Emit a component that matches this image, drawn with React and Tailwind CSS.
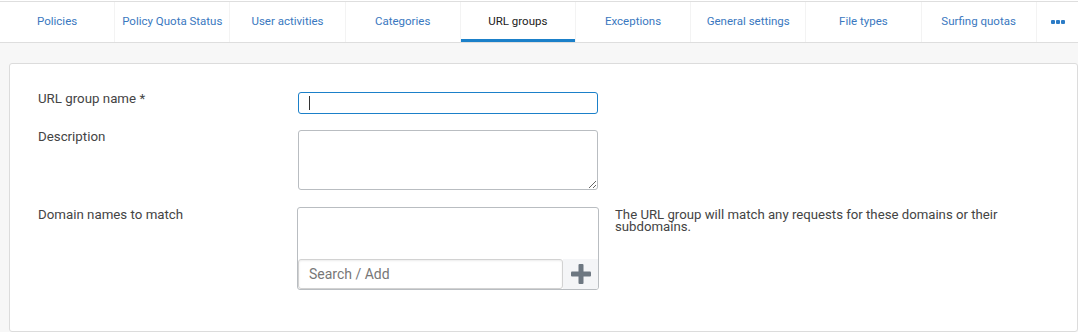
const tabs = [
  'Policies',
  'Policy Quota Status',
  'User activities',
  'Categories',
  'URL groups',
  'Exceptions',
  'General settings',
  'File types',
  'Surfing quotas',
];

function PlusIcon() {
  return (
    <svg width="20" height="20" viewBox="0 0 20 20">
      <rect x="7.5" y="0" width="5" height="20" rx="1" fill="#6d7781" />
      <rect x="0" y="7.5" width="20" height="5" rx="1" fill="#6d7781" />
    </svg>
  );
}

export default function App() {
  return (
    <div className="w-[1078px] h-[332px] bg-[#f7f7f7] font-['Roboto',sans-serif] overflow-hidden">
      <div className="bg-white pt-px">
        <div className="flex h-[42px] border-t border-b border-[#dedede]">
          {tabs.map((t) => {
            const active = t === 'URL groups';
            return (
              <div
                key={t}
                className={`w-[115.2px] shrink-0 flex items-center justify-center border-r border-[#f3f3f3] text-[11.5px] relative ${
                  active ? 'text-[#222]' : 'text-[#3a78c0]'
                }`}
              >
                <span className="-mt-px">{t}</span>
                {active && <div className="absolute left-0 right-0 bottom-0 h-[3px] bg-[#1b80c9]" />}
              </div>
            );
          })}
          <div className="flex-1 flex items-center justify-center gap-[1px] -mt-px pl-[2px]">
            <span className="w-[4px] h-[4px] rounded-[1px] bg-[#2c7cc6]" />
            <span className="w-[4px] h-[4px] rounded-[1px] bg-[#2c7cc6]" />
            <span className="w-[4px] h-[4px] rounded-[1px] bg-[#2c7cc6]" />
          </div>
        </div>
      </div>

      <div className="ml-[9px] mt-[20px] h-[269px] bg-white border border-[#dcdcdc] rounded-[3px] pl-[28px] pt-[28px] text-[13.3px] text-[#444]">
        <div className="flex">
          <div className="w-[260px] leading-[14px]">URL group name *</div>
          <div className="relative w-[300px] h-[22px] border border-[#1b80c9] rounded-[3px]">
            <div className="absolute left-[10px] top-[3px] w-px h-[14px] bg-[#333]" />
          </div>
        </div>

        <div className="flex mt-[16px]">
          <div className="w-[260px] leading-[14px]">Description</div>
          <textarea className="w-[300px] h-[60px] border border-[#b9bdc1] rounded-[3px] outline-none" />
        </div>

        <div className="flex mt-[17px]">
          <div className="w-[259px] leading-[14px] pt-px">Domain names to match</div>
          <div className="w-[302px] h-[83px] border border-[#b9bdc1] rounded-[3px] flex flex-col overflow-hidden">
            <div className="flex-1" />
            <div className="flex h-[30px]">
              <div className="w-[265px] border border-[#d2d2d2] rounded-[3px] shadow-[inset_0_1px_2px_rgba(0,0,0,0.08)] flex items-center pl-[10px] text-[14px] text-[#777]">
                Search / Add
              </div>
              <div className="flex-1 bg-[#f4f5f7] flex items-center justify-center">
                <PlusIcon />
              </div>
            </div>
          </div>
          <div className="ml-[16px] text-[13.2px] leading-[12px] w-[420px] pt-[2px]">
            The URL group will match any requests for these domains or their subdomains.
          </div>
        </div>
      </div>
    </div>
  );
}
